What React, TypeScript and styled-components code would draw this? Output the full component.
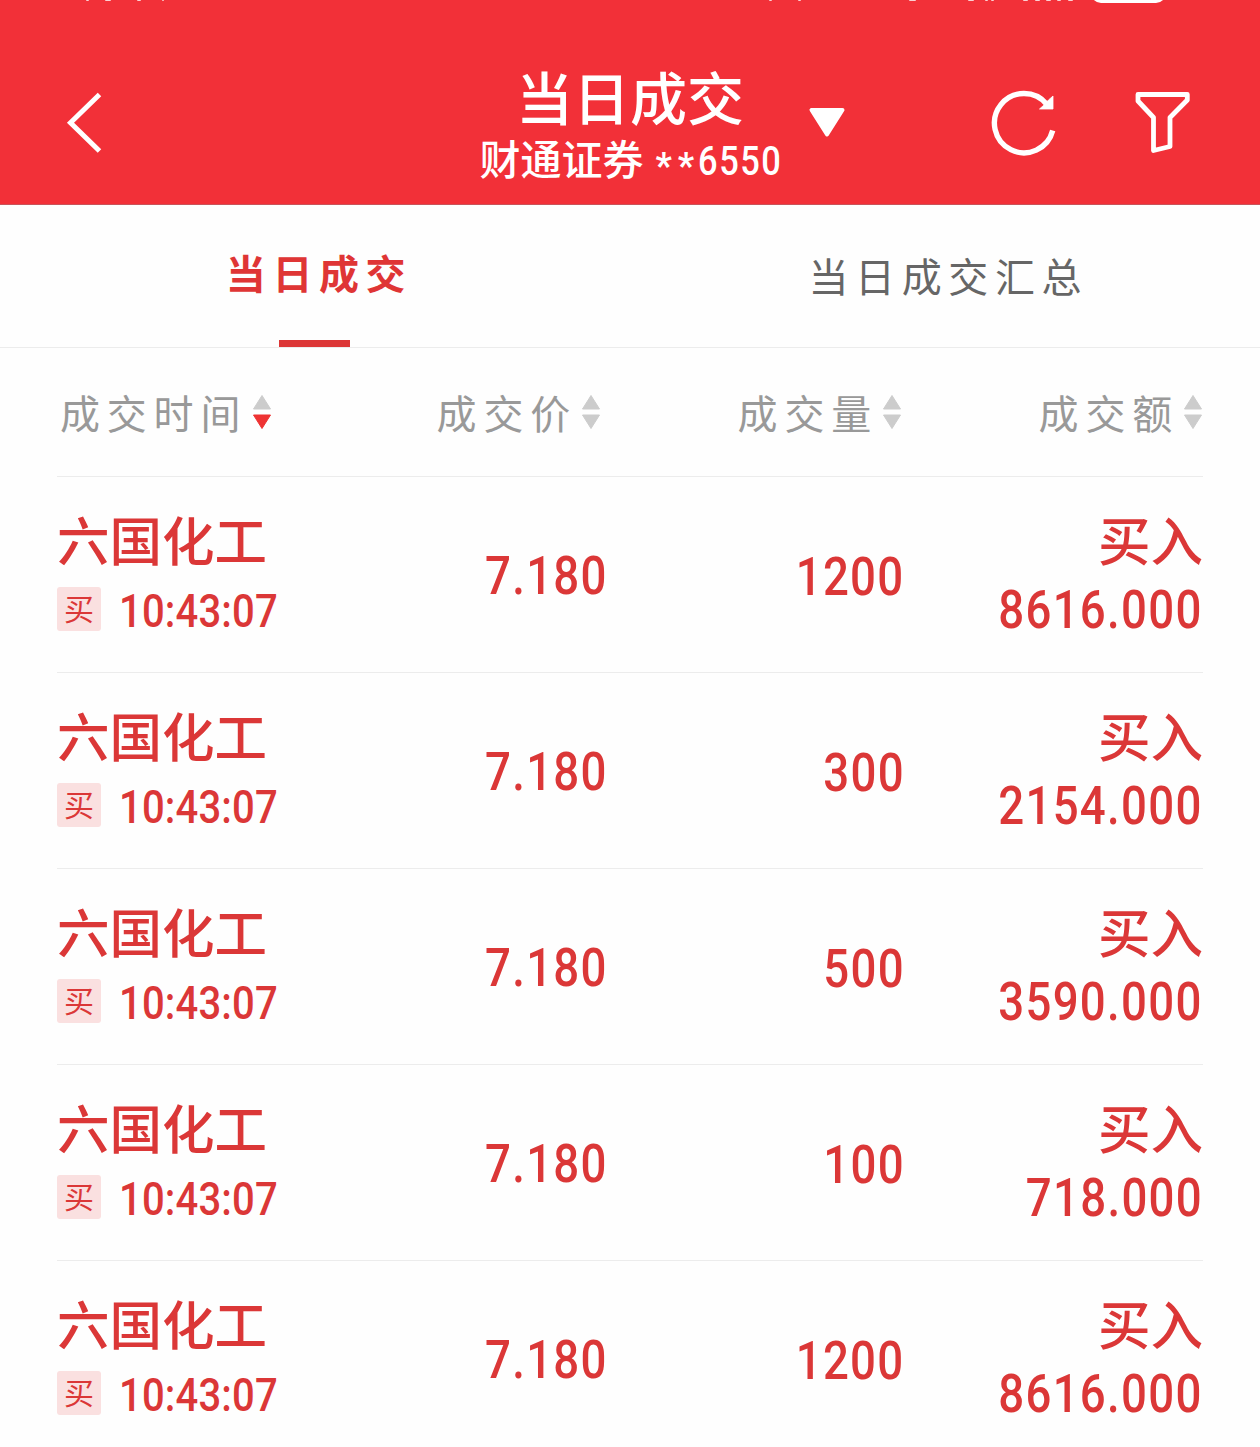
import React from "react";
import styled, { createGlobalStyle } from "styled-components";

const cjk = `"Noto Sans CJK SC", sans-serif`;

const Global = createGlobalStyle`
  * { box-sizing: border-box; }
  html, body { margin: 0; padding: 0; background: #fefefe; }
  body { font-family: ${cjk}; }
`;

const Screen = styled.main`
  width: 1260px;
  height: 1447px;
  overflow: hidden;
  background: #fefefe;
`;

const Header = styled.header`
  height: 205px;
  background: #f23038;
  border-bottom: 1px solid #c9545a;
  display: flex;
  flex-direction: column;
  color: #fff;
`;

const StatusBar = styled.div`
  height: 12px;
  svg { display: block; }
`;

const NavBar = styled.div`
  flex: 1;
  display: grid;
  grid-template-columns: 480px 300px 1fr;
  padding-bottom: 12px;
`;

const NavStart = styled.div`
  padding: 79px 0 0 66px;
  svg { display: block; }
`;

const TitleBlock = styled.div`
  display: flex;
  flex-direction: column;
  align-items: center;
  padding-top: 48px;
  white-space: nowrap;
`;

const Title = styled.h1`
  margin: 0;
  font-size: 57px;
  line-height: 70px;
  font-weight: 500;
`;

const Account = styled.div`
  display: flex;
  align-items: flex-start;
  width: 301px;
  margin-top: 1px;
  font-size: 41px;
  line-height: 52px;
  font-weight: 500;
`;

const Stars = styled.span`
  margin-left: 12px;
  padding-top: 9px;
  font-family: Roboto, sans-serif;
  font-size: 36px;
  font-weight: 700;
  line-height: 52px;
  letter-spacing: 5.8px;
`;

const NavEnd = styled.div`
  display: flex;
  align-items: flex-start;
  padding: 76px 0 0 28px;
  svg { display: block; }
`;

const Gap = styled.span<{ $w: number }>`
  width: ${(p) => p.$w}px;
`;

const Digits = styled.span<{ $size: number; $scale?: number; $gap?: number; $from?: string }>`
  display: inline-block;
  font-family: Roboto, sans-serif;
  font-size: ${(p) => p.$size}px;
  font-weight: 500;
  letter-spacing: ${(p) => p.$gap ?? 0}px;
  margin-right: ${(p) => -(p.$gap ?? 0)}px;
  transform: scaleX(${(p) => p.$scale ?? 0.86});
  transform-origin: ${(p) => p.$from ?? "right"} center;
`;

const AccountNo = styled.div`
  flex: 1;
  display: flex;
  justify-content: flex-end;
  margin-left: -20px;
  padding-top: 4px;
`;

const Tabs = styled.nav`
  height: 143px;
  display: grid;
  grid-template-columns: 1fr 1fr;
  border-bottom: 1px solid #ececec;
`;

const Tab = styled.div<{ $active?: boolean }>`
  display: flex;
  flex-direction: column;
  align-items: center;
  justify-content: space-between;
  padding-top: ${(p) => (p.$active ? 37 : 40)}px;
  padding-right: ${(p) => (p.$active ? 2 : 0)}px;
  font-size: 40px;
  line-height: 60px;
  letter-spacing: 6.6px;
  text-indent: ${(p) => (p.$active ? 10 : 6.6)}px;
  font-weight: ${(p) => (p.$active ? 700 : 400)};
  color: ${(p) => (p.$active ? "#df3535" : "#666")};
`;

const Marker = styled.i`
  width: 71px;
  height: 7px;
  background: #dc3636;
`;

const List = styled.section`
  margin: 0 57px;
`;

const HeadRow = styled.div`
  height: 129px;
  display: grid;
  grid-template-columns: 244px 300px 301px 301px;
  border-bottom: 1px solid #ececec;
`;

const HeadCell = styled.div<{ $first?: boolean }>`
  display: flex;
  justify-content: ${(p) => (p.$first ? "flex-start" : "flex-end")};
  padding-left: ${(p) => (p.$first ? 3 : 0)}px;
  padding-top: 34px;
  font-size: 40px;
  line-height: 60px;
  letter-spacing: 6.8px;
  color: #999;
  white-space: nowrap;
  svg {
    flex: none;
    margin: 12px 0 0 ${(p) => (p.$first ? 5 : 4)}px;
  }
`;

const Row = styled.article`
  height: 196px;
  display: grid;
  grid-template-columns: 300px 249px 297px 1fr;
  border-bottom: 1px solid #ececec;
  color: #db3737;
`;

const Stack = styled.div<{ $end?: boolean }>`
  display: flex;
  flex-direction: column;
  align-items: ${(p) => (p.$end ? "flex-end" : "flex-start")};
  padding-top: 25px;
`;

const Name = styled.div`
  font-size: 52.5px;
  line-height: 72px;
  height: 76px;
  font-weight: 500;
`;

const TimeLine = styled.div`
  display: flex;
  align-items: center;
  gap: 18px;
  height: 62px;
`;

const Tag = styled.span`
  width: 44px;
  height: 44px;
  border-radius: 3px;
  background: #fae0e0;
  font-size: 30px;
  line-height: 41px;
  text-align: center;
`;

const Clock = styled.div`
  padding-top: 3px;
`;

const Amount = styled.div`
  height: 64px;
  line-height: 64px;
  padding-right: 2px;
`;

const Value = styled.div<{ $top: number }>`
  text-align: right;
  line-height: 64px;
  padding-top: ${(p) => p.$top}px;
`;

function Sorter({ down }: { down?: boolean }) {
  const lower = down ? "#e33" : "#ccc";
  return (
    <svg width="20" height="36" viewBox="0 0 20 36">
      <path d="M10 1.5 18.5 15H1.5Z" fill="#ccc" stroke="#ccc" strokeLinejoin="round" />
      <path d="M10 34.5 18.5 21H1.5Z" fill={lower} stroke={lower} strokeLinejoin="round" />
    </svg>
  );
}

const specks = [
  [86, 3], [105, 6], [137, 4], [162, 2], [769, 3], [798, 3], [909, 7],
  [968, 6], [985, 3], [991, 3], [1023, 5], [1035, 5], [1046, 5], [1057, 4], [1068, 5],
];

const trades = [
  { volume: "1200", amount: "8616.000" },
  { volume: "300", amount: "2154.000" },
  { volume: "500", amount: "3590.000" },
  { volume: "100", amount: "718.000" },
  { volume: "1200", amount: "8616.000" },
];

export default function App() {
  return (
    <Screen>
      <Global />
      <Header>
        <StatusBar>
          <svg width="1260" height="12">
            {specks.map(([x, w]) => (
              <rect key={x} x={x} y="-1" width={w} height="2" rx="1" fill="#fbd0d2" />
            ))}
            <rect x="1091" y="-30" width="75" height="33" rx="10" fill="#fff" />
          </svg>
        </StatusBar>
        <NavBar>
          <NavStart>
            <svg width="38" height="64" viewBox="0 0 38 64" fill="none" stroke="#fff" strokeWidth="5">
              <path d="M33.5 3.5 4.5 31.8 33.5 60" />
            </svg>
          </NavStart>
          <TitleBlock>
            <Title>当日成交</Title>
            <Account>
              <span>财通证券</span>
              <Stars>**</Stars>
              <AccountNo>
                <Digits $size={41} $scale={0.84} $gap={1.8}>6550</Digits>
              </AccountNo>
            </Account>
          </TitleBlock>
          <NavEnd>
            <svg width="38" height="50" viewBox="0 0 38 50">
              <path d="M3.5 22H34.5L19 46.5Z" fill="#fff" stroke="#fff" strokeWidth="4" strokeLinejoin="round" />
            </svg>
            <Gap $w={144} />
            <svg width="70" height="70" viewBox="0 0 70 70">
              <path d="M62.7 42.5A29.6 29.6 0 1 1 57 16.5" fill="none" stroke="#fff" strokeWidth="5.4" />
              <path d="M63 8V21H49.5L54 17L58.5 12Z" fill="#fff" stroke="#fff" strokeWidth="0.8" />
            </svg>
            <Gap $w={73} />
            <svg width="60" height="70" viewBox="0 0 60 70">
              <path d="M5 6.5H54.3V12L37 29.5V58.5L20.5 62.5V29.5L5 13Z" fill="none" stroke="#fff" strokeWidth="4.8" strokeLinejoin="round" />
            </svg>
          </NavEnd>
        </NavBar>
      </Header>
      <Tabs>
        <Tab $active>
          当日成交
          <Marker />
        </Tab>
        <Tab>当日成交汇总</Tab>
      </Tabs>
      <List>
        <HeadRow>
          <HeadCell $first>成交时间<Sorter down /></HeadCell>
          <HeadCell>成交价<Sorter /></HeadCell>
          <HeadCell>成交量<Sorter /></HeadCell>
          <HeadCell>成交额<Sorter /></HeadCell>
        </HeadRow>
        {trades.map((t, i) => (
          <Row key={i}>
            <Stack>
              <Name>六国化工</Name>
              <TimeLine>
                <Tag>买</Tag>
                <Clock>
                  <Digits $size={46.5} $from="left" $gap={0.2}>10:43:07</Digits>
                </Clock>
              </TimeLine>
            </Stack>
            <Value $top={67}><Digits $size={53} $gap={1.5}>7.180</Digits></Value>
            <Value $top={68}><Digits $size={53} $gap={1.5}>{t.volume}</Digits></Value>
            <Stack $end>
              <Name>买入</Name>
              <Amount><Digits $size={53} $gap={1.5}>{t.amount}</Digits></Amount>
            </Stack>
          </Row>
        ))}
      </List>
    </Screen>
  );
}
